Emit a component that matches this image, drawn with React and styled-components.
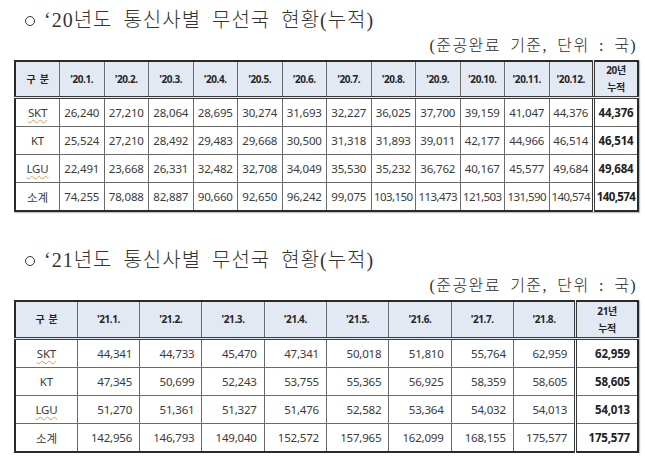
import React from "react";
import styled, { createGlobalStyle } from "styled-components";

const GlobalStyle = createGlobalStyle`
  body {
    margin: 0;
    background: #ffffff;
  }
`;

const Page = styled.div`
  width: 645px;
  padding: 8px 8px 0 14px;
  box-sizing: border-box;
  background: #ffffff;
`;

const Section = styled.section`
  display: flex;
  flex-direction: column;
  margin-bottom: ${(p) => p.$gap || 0}px;
`;

const Title = styled.h2`
  display: flex;
  align-items: center;
  margin: 0 0 0 11px;
  height: 24px;
  line-height: 24px;
  font-family: "Liberation Serif", "Noto Sans CJK KR", serif;
  font-weight: 300;
  font-size: 20px;
  color: #333333;
  letter-spacing: 1px;
  word-spacing: 5px;
  white-space: pre;
`;

const Mark = styled.span`
  display: inline-block;
  width: 8px;
  height: 8px;
  border: 1.3px solid #333333;
  border-radius: 50%;
  margin: 2px 9px 0 0;
`;

const Unit = styled.div`
  align-self: flex-end;
  height: 20px;
  line-height: 20px;
  margin: 4px 0 4px;
  font-family: "Liberation Serif", "Noto Sans CJK KR", serif;
  font-weight: 300;
  font-size: 16px;
  color: #2b2b2b;
  letter-spacing: 1.4px;
  word-spacing: 4px;
`;

const Table = styled.table`
  width: 623px;
  table-layout: fixed;
  border-collapse: collapse;
  border: 2px solid #2a2a2a;
  box-shadow: 1px 1px 1px rgba(0, 0, 0, 0.25);
  font-family: "Noto Sans", "Noto Sans CJK KR", sans-serif;
`;

const HeadCell = styled.th`
  height: ${(p) => p.$h}px;
  padding: 0;
  background: #e3e9f3;
  border: 1px solid #6a6a6a;
  border-bottom: 3px double #3a3a3a;
  ${(p) => p.$total && "border-left: 3px double #3a3a3a;"}
  font-size: 10px;
  font-weight: 700;
  color: #262626;
  letter-spacing: -0.4px;
  line-height: 17px;
  text-align: center;
  white-space: pre;
`;

const Cell = styled.td`
  height: ${(p) => p.$h}px;
  padding: 0 ${(p) => (p.$align === "right" ? 7 : 0)}px 0 0;
  border: 1px solid #6a6a6a;
  ${(p) => p.$total && "border-left: 3px double #3a3a3a;"}
  font-size: 11.5px;
  font-weight: ${(p) => (p.$total ? 700 : 400)};
  color: ${(p) => (p.$total ? "#222222" : "#3a3a3a")};
  letter-spacing: ${(p) => (p.$tight ? -0.6 : -0.2)}px;
  text-align: ${(p) => p.$align};
  white-space: nowrap;
`;

const Name = styled.span`
  ${(p) =>
    p.$marked &&
    "text-decoration: underline wavy #d49a5a; text-decoration-thickness: 1px; text-underline-offset: 2px;"}
`;

const table20 = {
  heads: ["'20.1.", "'20.2.", "'20.3.", "'20.4.", "'20.5.", "'20.6.", "'20.7.", "'20.8.", "'20.9.", "'20.10.", "'20.11.", "'20.12."],
  total: "20년",
  rows: [
    ["SKT", true, ["26,240", "27,210", "28,064", "28,695", "30,274", "31,693", "32,227", "36,025", "37,700", "39,159", "41,047", "44,376"], "44,376"],
    ["KT", false, ["25,524", "27,210", "28,492", "29,483", "29,668", "30,500", "31,318", "31,893", "39,011", "42,177", "44,966", "46,514"], "46,514"],
    ["LGU", true, ["22,491", "23,668", "26,331", "32,482", "32,708", "34,049", "35,530", "35,232", "36,762", "40,167", "45,577", "49,684"], "49,684"],
    ["소계", false, ["74,255", "78,088", "82,887", "90,660", "92,650", "96,242", "99,075", "103,150", "113,473", "121,503", "131,590", "140,574"], "140,574"],
  ],
};

const table21 = {
  heads: ["'21.1.", "'21.2.", "'21.3.", "'21.4.", "'21.5.", "'21.6.", "'21.7.", "'21.8."],
  total: "21년",
  rows: [
    ["SKT", true, ["44,341", "44,733", "45,470", "47,341", "50,018", "51,810", "55,764", "62,959"], "62,959"],
    ["KT", false, ["47,345", "50,699", "52,243", "53,755", "55,365", "56,925", "58,359", "58,605"], "58,605"],
    ["LGU", true, ["51,270", "51,361", "51,327", "51,476", "52,582", "53,364", "54,032", "54,013"], "54,013"],
    ["소계", false, ["142,956", "146,793", "149,040", "152,572", "157,965", "162,099", "168,155", "175,577"], "175,577"],
  ],
};

function StatTable({ data, headH, rowH, align }) {
  const cols = data.heads.length + 2;
  const w = 623 / cols;
  return (
    <Table>
      <colgroup>
        {Array.from({ length: cols }).map((_, i) => (
          <col key={i} style={{ width: `${w}px` }} />
        ))}
      </colgroup>
      <thead>
        <tr>
          <HeadCell $h={headH}>구  분</HeadCell>
          {data.heads.map((h) => (
            <HeadCell key={h} $h={headH}>
              {h}
            </HeadCell>
          ))}
          <HeadCell $h={headH} $total>
            {data.total}
            {"\n"}누적
          </HeadCell>
        </tr>
      </thead>
      <tbody>
        {data.rows.map(([name, marked, vals, total]) => (
          <tr key={name}>
            <Cell $h={rowH} $align="center">
              <Name $marked={marked}>{name}</Name>
            </Cell>
            {vals.map((v, i) => (
              <Cell key={i} $h={rowH} $align={align} $tight={v.length > 6 && align === "center"}>
                {v}
              </Cell>
            ))}
            <Cell $h={rowH} $align={align} $total $tight={total.length > 6 && align === "center"}>
              {total}
            </Cell>
          </tr>
        ))}
      </tbody>
    </Table>
  );
}

export default function App() {
  return (
    <Page>
      <GlobalStyle />
      <Section $gap={36}>
        <Title>
          <Mark />‘20년도 통신사별 무선국 현황(누적)
        </Title>
        <Unit>(준공완료 기준, 단위 : 국)</Unit>
        <StatTable data={table20} headH={33} rowH={27} align="center" />
      </Section>
      <Section>
        <Title>
          <Mark />‘21년도 통신사별 무선국 현황(누적)
        </Title>
        <Unit>(준공완료 기준, 단위 : 국)</Unit>
        <StatTable data={table21} headH={35} rowH={27} align="right" />
      </Section>
    </Page>
  );
}
